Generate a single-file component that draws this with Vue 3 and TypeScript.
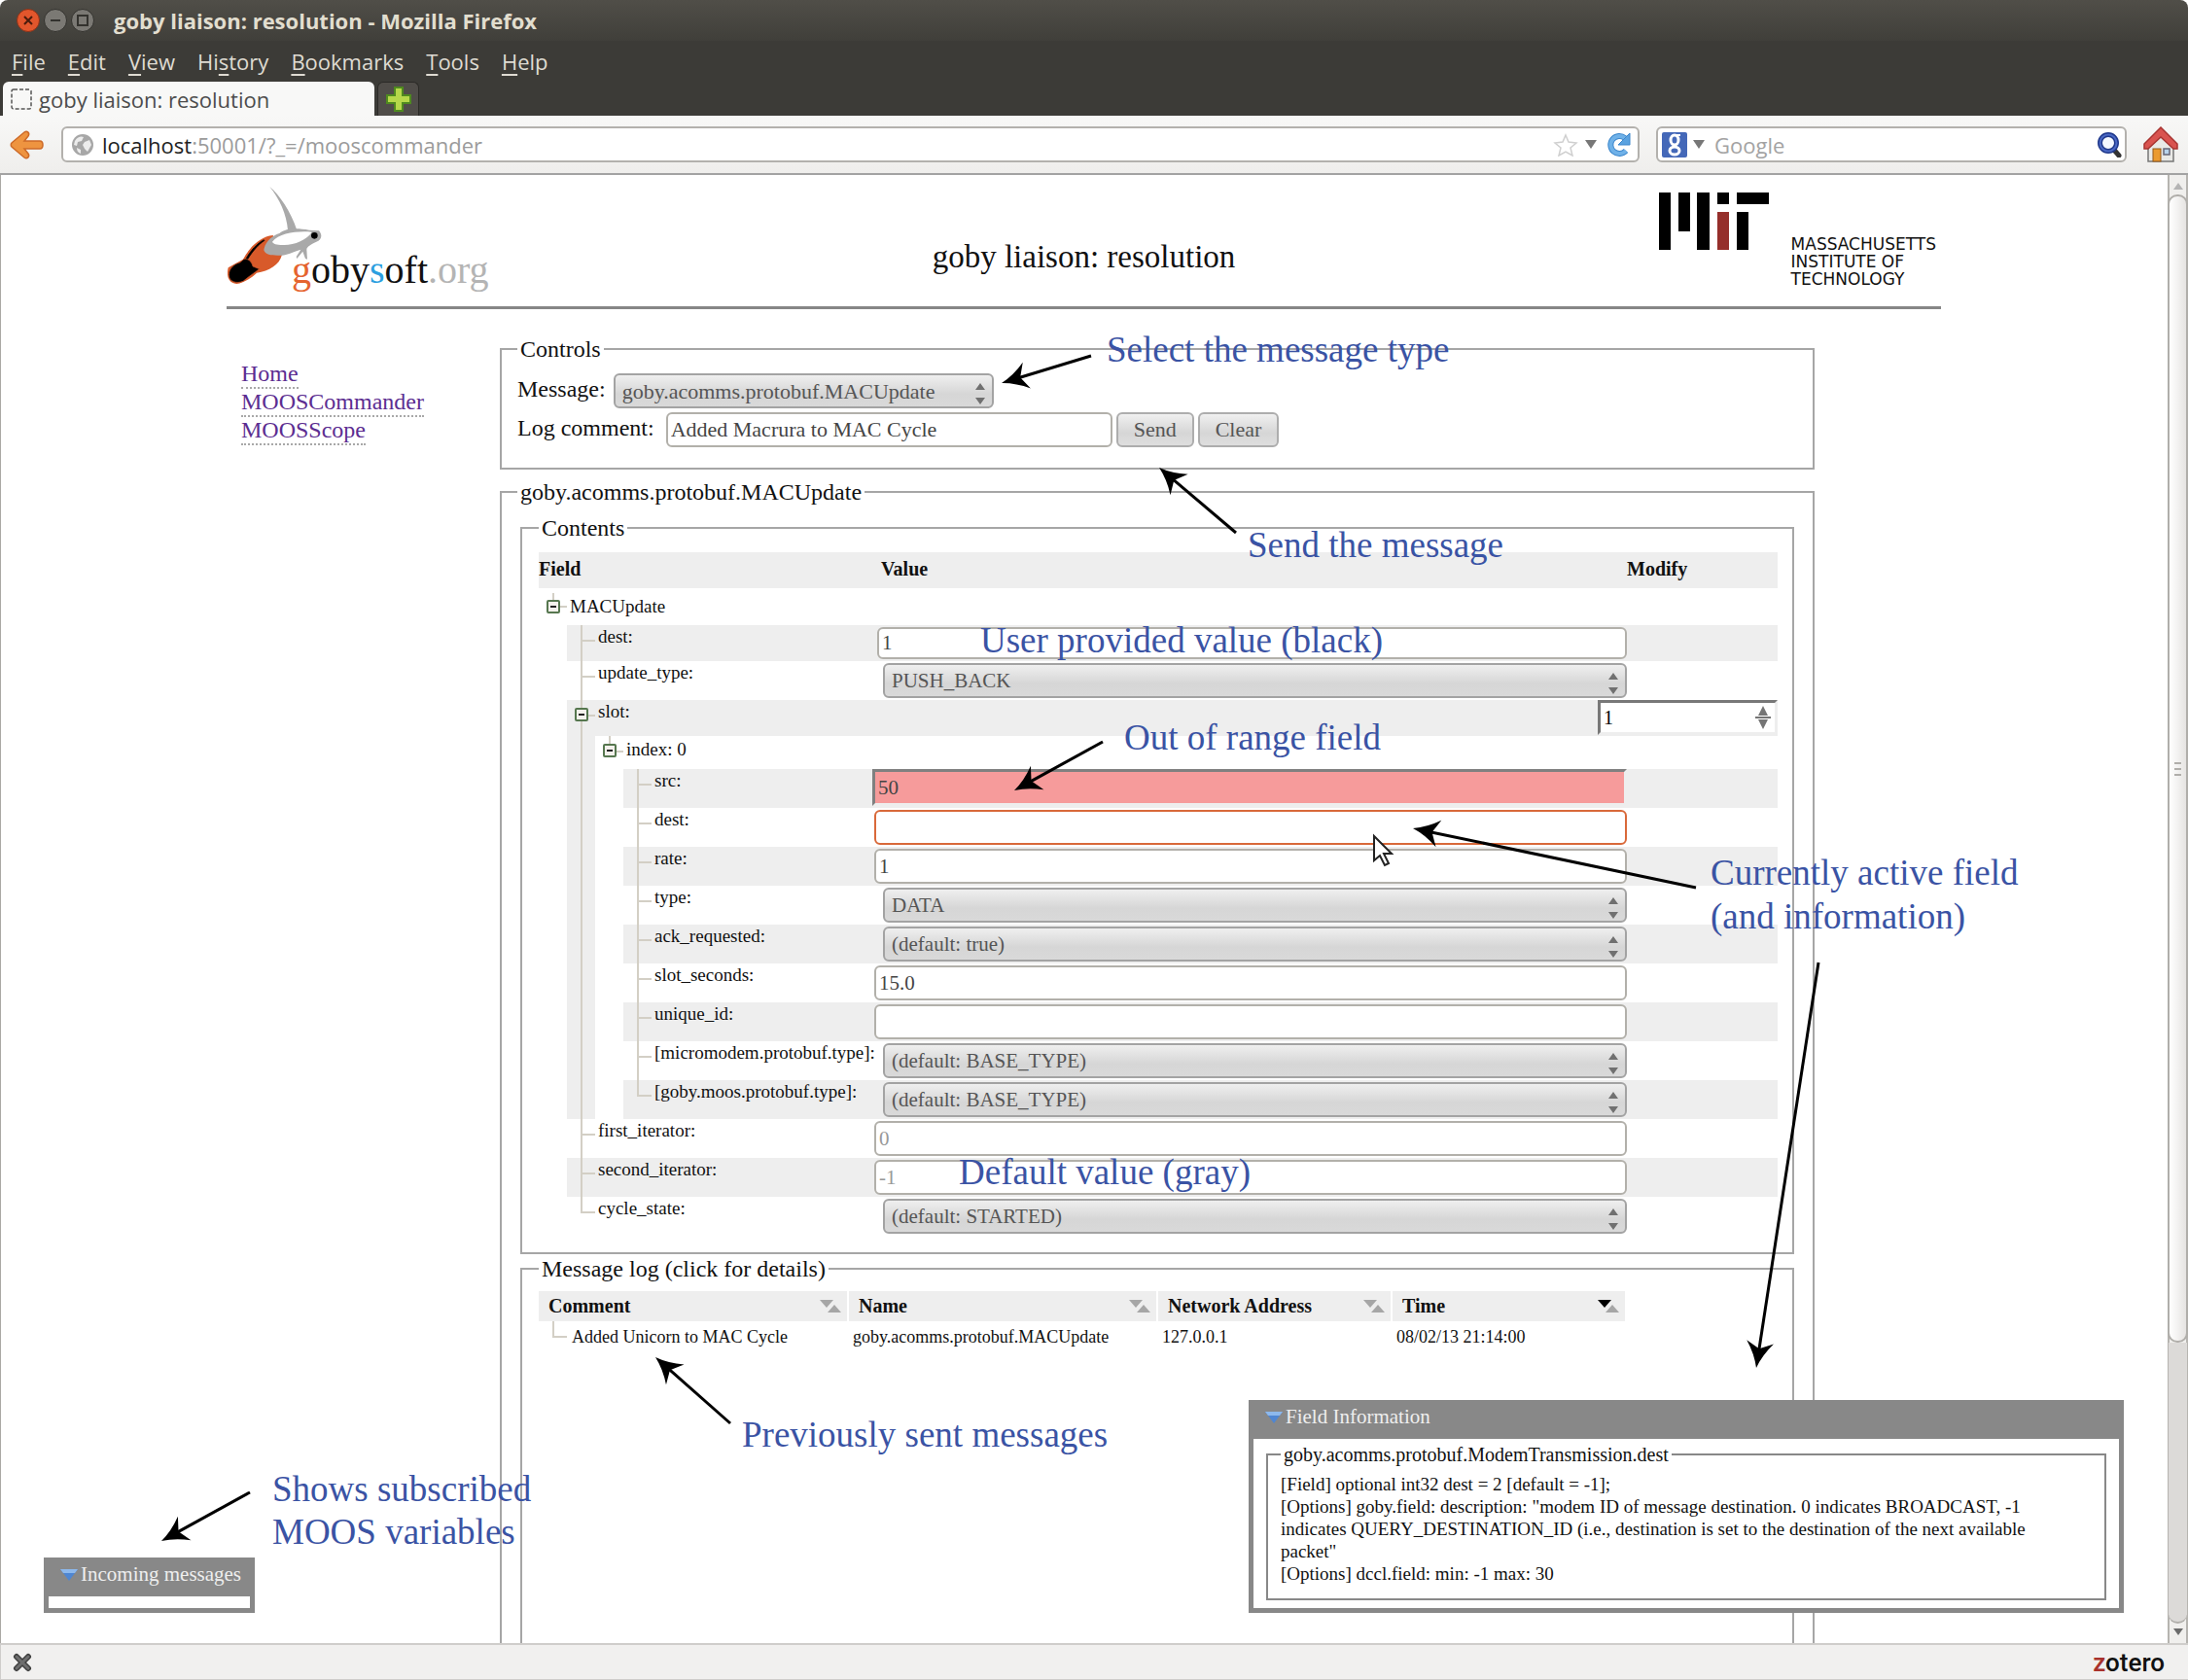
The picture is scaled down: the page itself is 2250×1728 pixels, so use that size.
<script setup lang="ts">
import { ref } from 'vue'

type Kind = 'text' | 'select' | 'spin' | 'none'

interface Field {
  id: string
  label: string
  depth: number
  kind: Kind
  value?: string
  shaded?: boolean
  node?: boolean
  last?: boolean
  size?: 'root' | 'compact' | 'index'
  state?: 'invalid' | 'active' | 'fallback'
}

interface Arrow {
  tail: [number, number]
  tip: [number, number]
}

const menus = [
  ['', 'F', 'ile'],
  ['', 'E', 'dit'],
  ['', 'V', 'iew'],
  ['Hi', 's', 'tory'],
  ['', 'B', 'ookmarks'],
  ['', 'T', 'ools'],
  ['', 'H', 'elp'],
]

const links = ['Home', 'MOOSCommander', 'MOOSScope']
const messageType = ref('goby.acomms.protobuf.MACUpdate')
const comment = ref('Added Macrura to MAC Cycle')

const fields = ref<Field[]>([
  { id: 'root', label: 'MACUpdate', depth: 0, kind: 'none', node: true, size: 'root' },
  { id: 'dest', label: 'dest:', depth: 1, kind: 'text', value: '1', shaded: true, size: 'compact' },
  { id: 'update', label: 'update_type:', depth: 1, kind: 'select', value: 'PUSH_BACK' },
  { id: 'slot', label: 'slot:', depth: 1, kind: 'spin', value: '1', shaded: true, node: true, size: 'compact' },
  { id: 'index', label: 'index: 0', depth: 2, kind: 'none', node: true, size: 'index' },
  { id: 'src', label: 'src:', depth: 3, kind: 'text', value: '50', shaded: true, state: 'invalid' },
  { id: 'slot-dest', label: 'dest:', depth: 3, kind: 'text', value: '', state: 'active' },
  { id: 'rate', label: 'rate:', depth: 3, kind: 'text', value: '1', shaded: true },
  { id: 'type', label: 'type:', depth: 3, kind: 'select', value: 'DATA' },
  { id: 'ack', label: 'ack_requested:', depth: 3, kind: 'select', value: '(default: true)', shaded: true },
  { id: 'seconds', label: 'slot_seconds:', depth: 3, kind: 'text', value: '15.0' },
  { id: 'unique', label: 'unique_id:', depth: 3, kind: 'text', value: '', shaded: true },
  { id: 'micromodem', label: '[micromodem.protobuf.type]:', depth: 3, kind: 'select', value: '(default: BASE_TYPE)' },
  { id: 'moos', label: '[goby.moos.protobuf.type]:', depth: 3, kind: 'select', value: '(default: BASE_TYPE)', shaded: true, last: true },
  { id: 'first', label: 'first_iterator:', depth: 1, kind: 'text', value: '0', state: 'fallback' },
  { id: 'second', label: 'second_iterator:', depth: 1, kind: 'text', value: '-1', shaded: true, state: 'fallback' },
  { id: 'cycle', label: 'cycle_state:', depth: 1, kind: 'select', value: '(default: STARTED)', last: true },
])

const logColumns = [
  { name: 'Comment', sorted: false },
  { name: 'Name', sorted: false },
  { name: 'Network Address', sorted: false },
  { name: 'Time', sorted: true },
]

const notes = [
  { x: 1138, y: 372, text: 'Select the message type' },
  { x: 1283, y: 573, text: 'Send the message' },
  { x: 1008, y: 671, text: 'User provided value (black)' },
  { x: 1156, y: 771, text: 'Out of range field' },
  { x: 1759, y: 910, text: 'Currently active field' },
  { x: 1759, y: 955, text: '(and information)' },
  { x: 986, y: 1218, text: 'Default value (gray)' },
  { x: 763, y: 1488, text: 'Previously sent messages' },
  { x: 280, y: 1544, text: 'Shows subscribed' },
  { x: 280, y: 1588, text: 'MOOS variables' },
]

const arrows: Arrow[] = [
  { tail: [1122, 366], tip: [1030, 394] },
  { tail: [1271, 548], tip: [1192, 481] },
  { tail: [1134, 763], tip: [1043, 813] },
  { tail: [1744, 913], tip: [1453, 852] },
  { tail: [1870, 990], tip: [1806, 1407] },
  { tail: [751, 1464], tip: [674, 1396] },
  { tail: [257, 1535], tip: [166, 1585] },
]

function headTransform(a: Arrow): string {
  const angle = (Math.atan2(a.tip[1] - a.tail[1], a.tip[0] - a.tail[0]) * 180) / Math.PI
  return `translate(${a.tip[0]} ${a.tip[1]}) rotate(${angle})`
}

function shaftEnd(a: Arrow): [number, number] {
  const dx = a.tail[0] - a.tip[0]
  const dy = a.tail[1] - a.tip[1]
  const len = Math.hypot(dx, dy)
  return [a.tip[0] + (dx / len) * 18, a.tip[1] + (dy / len) * 18]
}
</script>

<template>
  <div class="window">
    <header class="titlebar">
      <button class="wm close" aria-label="Close window">
        <svg viewBox="0 0 24 24"><circle cx="12" cy="12" r="11.500" fill="#e2562c" stroke="#8a3218" /><path d="M8 8l8 8M16 8l-8 8" stroke="#4a1b0c" stroke-width="2" /></svg>
      </button>
      <button class="wm" aria-label="Minimise window">
        <svg viewBox="0 0 24 24"><circle cx="12" cy="12" r="11.500" fill="#7b7974" stroke="#33322e" /><path d="M7 12h10" stroke="#33322e" stroke-width="2" /></svg>
      </button>
      <button class="wm" aria-label="Maximise window">
        <svg viewBox="0 0 24 24"><circle cx="12" cy="12" r="11.500" fill="#7b7974" stroke="#33322e" /><rect x="7" y="7" width="10" height="10" fill="none" stroke="#33322e" stroke-width="2" /></svg>
      </button>
      <h1>goby liaison: resolution - Mozilla Firefox</h1>
    </header>

    <nav class="menubar" aria-label="Application menu">
      <button v-for="m in menus" :key="m.join('')">{{ m[0] }}<u>{{ m[1] }}</u>{{ m[2] }}</button>
    </nav>

    <div class="tabs">
      <button class="tab">
        <svg width="22" height="22" viewBox="0 0 22 22"><rect x="1" y="1" width="20" height="20" rx="2" fill="none" stroke="#555" stroke-width="1.500" stroke-dasharray="4 2" /></svg>
        goby liaison: resolution
      </button>
      <button class="new-tab" aria-label="New tab">
        <svg width="26" height="26" viewBox="0 0 26 26"><path d="M9 1h8v8h8v8h-8v8H9v-8H1V9h8z" fill="#b5d84a" stroke="#4f8a1f" stroke-width="2" /></svg>
      </button>
    </div>

    <div class="toolbar">
      <button class="icon-button" aria-label="Back">
        <svg width="36" height="32" viewBox="0 0 36 32"><path d="M15 3c3-2 6 1 4 4l-4 5h16c4 0 4 8 0 8H15l4 5c2 3-1 6-4 4L2 18c-1-1-1-3 0-4z" fill="#ee9440" stroke="#cd6a28" stroke-width="1.500" /></svg>
      </button>
      <div class="location">
        <svg width="24" height="24" viewBox="0 0 24 24"><circle cx="12" cy="12" r="11" fill="#a7a7a7" /><path d="M4 8c3-5 7-5 9-4l-2 4-4 1-1 4-3-1zM14 9l5-2 2 5-4 7-3-3-2-4zM6 15l4 2v4c-3-1-4-3-4-6z" fill="#ececec" /></svg>
        <label class="host" for="url">localhost</label><input id="url" type="text" value=":50001/?_=/mooscommander" />
        <button class="icon-button" aria-label="Bookmark this page">
          <svg width="26" height="24" viewBox="0 0 26 24"><path d="M13 2l3 7 8 1-6 5 2 8-7-4-7 4 2-8-6-5 8-1z" fill="#fff" stroke="#cfcfcf" stroke-width="1.500" /></svg>
        </button>
        <button class="icon-button drop" aria-label="Show history"><svg width="12" height="9" viewBox="0 0 12 9"><path d="M0 0h12L6 9z" fill="#777" /></svg></button>
        <button class="icon-button" aria-label="Reload">
          <svg width="26" height="26" viewBox="0 0 26 26"><path d="M20 19a9 9 0 1 1-1-13" fill="none" stroke="#3c87cc" stroke-width="6" /><path d="M20 19a9 9 0 1 1-1-13" fill="none" stroke="#6fb1e8" stroke-width="4" /><path d="M24 1v12H12z" fill="#5aa2e0" stroke="#3c87cc" /></svg>
        </button>
      </div>
      <div class="search">
        <svg width="26" height="26" viewBox="0 0 26 26"><rect width="26" height="26" rx="2" fill="#4468b8" /><ellipse cx="13" cy="8" rx="4" ry="5" fill="none" stroke="#fff" stroke-width="3" /><ellipse cx="13" cy="19" rx="5" ry="4" fill="none" stroke="#fff" stroke-width="3" /><path d="M15 3h4" stroke="#fff" stroke-width="2" /></svg>
        <svg class="caret" width="12" height="9" viewBox="0 0 12 9"><path d="M0 0h12L6 9z" fill="#777" /></svg>
        <input type="text" placeholder="Google" aria-label="Search with Google" />
        <button class="icon-button" aria-label="Search">
          <svg width="26" height="26" viewBox="0 0 26 26"><path d="M17 17l6 7" stroke="#333" stroke-width="5" stroke-linecap="round" /><circle cx="12" cy="11" r="8.500" fill="#f4f8ff" stroke="#20398c" stroke-width="5" /><circle cx="12" cy="11" r="8.500" fill="none" stroke="#4a68c4" stroke-width="2" /></svg>
        </button>
      </div>
      <button class="icon-button" aria-label="Home page">
        <svg width="36" height="38" viewBox="0 0 36 38"><path d="M5 18v18h26V18L18 6z" fill="#e9e9e6" stroke="#777" stroke-width="1.500" /><path d="M18 1L1 18v5h4l13-12 13 12h4v-5z" fill="#d9534f" stroke="#a83431" stroke-width="1.500" /><rect x="10" y="23" width="8" height="13" fill="#eb9a2f" stroke="#94591a" /><rect x="21" y="23" width="6" height="6" fill="#b8d4ec" stroke="#667" stroke-width="1.500" /></svg>
      </button>
    </div>

    <div class="viewport">
      <div class="page">
        <header class="masthead">
          <div class="logo">
            <svg class="fish" width="103" height="103" viewBox="99 60 309 309">
              <path d="M232 66C262 92 296 140 316 200L288 200C284 150 262 104 232 66z" fill="#a9a9a9" />
              <path d="M242 216C200 220 168 256 150 290L104 316C98 340 104 364 130 366C150 364 176 348 192 332C230 326 262 308 270 276z" fill="#d85a2a" />
              <path d="M214 230C194 240 172 264 158 290L164 290C180 264 196 246 216 232z" fill="#000" stroke="#000" stroke-width="2" />
              <path d="M152 290C164 286 176 296 180 312L200 320C184 332 164 346 150 358C130 366 106 360 106 338C106 318 124 304 140 300z" fill="#000" stroke="#c9552a" stroke-width="2" />
              <path d="M214 262C218 232 244 216 262 210C284 192 320 194 354 200L384 202C396 216 392 230 376 236C356 246 346 252 346 260L348 290L342 288L334 266L316 288L314 282L328 260C300 268 284 280 256 278C236 278 218 276 214 262z" fill="#a9a9a9" />
              <path d="M240 236C262 208 320 202 362 206C348 230 304 248 272 246C254 246 242 242 240 236z" fill="#fff" />
              <circle cx="370" cy="217" r="10" fill="#000" />
            </svg>
            <span class="wordmark"><b class="g">g</b>oby<b class="s">s</b>oft<b class="org">.org</b></span>
          </div>
          <h2>goby liaison: resolution</h2>
          <div class="mit">
            <svg width="113" height="59" viewBox="0 0 113 59"><path d="M0 0h12v59H0zM20 0h12v40H20zM39 0h13v59H39zM60 0h12v12H60zM80 0h33v12H80zM80 20h12v39H80z" fill="#000" /><path d="M60 20h12v39H60z" fill="#952f2b" /></svg>
            <p>MASSACHUSETTS<br />INSTITUTE OF<br />TECHNOLOGY</p>
          </div>
        </header>

        <div class="columns">
          <nav class="side" aria-label="Site">
            <ul>
              <li v-for="l in links" :key="l"><a href="#">{{ l }}</a></li>
            </ul>
          </nav>

          <main>
            <fieldset class="controls">
              <legend>Controls</legend>
              <div class="control-row">
                <label for="message">Message:</label>
                <span class="combo message">
                  <select id="message" v-model="messageType"><option>goby.acomms.protobuf.MACUpdate</option></select>
                  <svg width="10" height="22" viewBox="0 0 10 22"><path d="M0 7l5-7 5 7zM0 15h10l-5 7z" fill="#707070" /></svg>
                </span>
              </div>
              <div class="control-row">
                <label for="comment">Log comment:</label>
                <input id="comment" v-model="comment" class="box comment" type="text" />
                <button class="push">Send</button>
                <button class="push">Clear</button>
              </div>
            </fieldset>

            <fieldset class="message-box">
              <legend>goby.acomms.protobuf.MACUpdate</legend>

              <fieldset class="inner">
                <legend>Contents</legend>
                <table class="tree">
                  <colgroup><col class="c-field" /><col /><col class="c-modify" /></colgroup>
                  <thead>
                    <tr><th scope="col">Field</th><th scope="col" class="value-head">Value</th><th scope="col">Modify</th></tr>
                  </thead>
                  <tbody>
                    <tr v-for="f in fields" :key="f.id" :class="[f.size, { shaded: f.shaded }]">
                      <td class="name">
                        <div class="branch">
                          <span v-if="f.depth > 0" class="gap"></span>
                          <span v-if="f.depth > 1" class="gap strip"></span>
                          <span v-if="f.depth > 2" class="gap"></span>
                          <span class="joint" :class="{ top: f.depth % 2 === 0, last: f.last }">
                            <button v-if="f.node" class="toggle" :aria-label="'Collapse ' + f.label"></button>
                          </span>
                          <label :for="f.id">{{ f.label }}</label>
                        </div>
                      </td>
                      <template v-if="f.kind === 'spin'">
                        <td colspan="2" class="fill spin-cell">
                          <span class="spin">
                            <input :id="f.id" v-model="f.value" type="text" />
                            <svg width="16" height="24" viewBox="0 0 16 24"><path d="M3 10l5-10 5 10zM3 14h10l-5 10zM0 11h16v2H0z" fill="#757575" /></svg>
                          </span>
                        </td>
                      </template>
                      <template v-else>
                        <td class="fill">
                          <input v-if="f.kind === 'text'" :id="f.id" v-model="f.value" type="text" class="box" :class="f.state" />
                          <span v-else-if="f.kind === 'select'" class="combo">
                            <select :id="f.id" v-model="f.value"><option>{{ f.value }}</option></select>
                            <svg width="10" height="22" viewBox="0 0 10 22"><path d="M0 7l5-7 5 7zM0 15h10l-5 7z" fill="#707070" /></svg>
                          </span>
                        </td>
                        <td class="fill"></td>
                      </template>
                    </tr>
                  </tbody>
                </table>
              </fieldset>

              <fieldset class="inner log">
                <legend>Message log (click for details)</legend>
                <table class="log-table">
                  <colgroup><col class="wide" /><col class="wide" /><col class="thin" /><col class="thin" /></colgroup>
                  <thead>
                    <tr>
                      <th v-for="c in logColumns" :key="c.name" scope="col">
                        <div>
                          {{ c.name }}
                          <svg width="22" height="13" viewBox="0 0 22 13"><path d="M8 13l7-8 7 8z" fill="#a6a6a6" /><path d="M0 0h14L7 8z" :fill="c.sorted ? '#000' : '#a6a6a6'" /></svg>
                        </div>
                      </th>
                    </tr>
                  </thead>
                  <tbody>
                    <tr>
                      <td class="first"><span class="joint last"></span>Added Unicorn to MAC Cycle</td>
                      <td>goby.acomms.protobuf.MACUpdate</td>
                      <td>127.0.0.1</td>
                      <td>08/02/13 21:14:00</td>
                    </tr>
                  </tbody>
                </table>
              </fieldset>
            </fieldset>
          </main>
        </div>

        <section class="panel incoming">
          <h3><svg width="18" height="12" viewBox="0 0 18 12"><path d="M0 0h18L9 12z" fill="#4f86d2" /><path d="M0 0h18l-3 4H3z" fill="#8db8ec" /></svg>Incoming messages</h3>
          <div class="empty"></div>
        </section>

        <section class="panel info">
          <h3><svg width="18" height="12" viewBox="0 0 18 12"><path d="M0 0h18L9 12z" fill="#4f86d2" /><path d="M0 0h18l-3 4H3z" fill="#8db8ec" /></svg>Field Information</h3>
          <div class="panel-body">
            <fieldset>
              <legend>goby.acomms.protobuf.ModemTransmission.dest</legend>
              <p>[Field] optional int32 dest = 2 [default = -1];</p>
              <p>[Options] goby.field: description: "modem ID of message destination. 0 indicates BROADCAST, -1 indicates QUERY_DESTINATION_ID (i.e., destination is set to the destination of the next available packet"</p>
              <p>[Options] dccl.field: min: -1 max: 30</p>
            </fieldset>
          </div>
        </section>
      </div>

      <div class="scrollbar" aria-hidden="true">
        <svg width="10" height="7" viewBox="0 0 10 7"><path d="M0 7l5-7 5 7z" fill="#b4b4b4" /></svg>
        <div class="thumb"><i></i><i></i><i></i></div>
        <div class="trough"></div>
        <svg width="10" height="7" viewBox="0 0 10 7"><path d="M0 0h10L5 7z" fill="#6b6b6b" /></svg>
      </div>
    </div>

    <footer class="statusbar">
      <button class="icon-button" aria-label="Close add-on bar">
        <svg width="20" height="20" viewBox="0 0 20 20"><path d="M4 4l12 12M16 4L4 16" stroke="#3f3f3f" stroke-width="6" stroke-linecap="round" /><path d="M4 4l12 12M16 4L4 16" stroke="#6e6e6e" stroke-width="3" stroke-linecap="round" /></svg>
      </button>
      <span class="zotero"><b>z</b>otero</span>
    </footer>

    <svg class="notes">
      <text v-for="n in notes" :key="n.text" :x="n.x" :y="n.y">{{ n.text }}</text>
      <g v-for="(a, i) in arrows" :key="i">
        <line :x1="a.tail[0]" :y1="a.tail[1]" :x2="shaftEnd(a)[0]" :y2="shaftEnd(a)[1]" stroke="#000" stroke-width="3" />
        <path d="M0 0Q-14 -4 -27 -14L-20 0L-27 14Q-14 4 0 0z" :transform="headTransform(a)" />
      </g>
      <path d="M1413 860v25l6-5 5 10 4-2-5-10h8z" fill="#fff" stroke="#222" stroke-width="2" />
    </svg>
  </div>
</template>

<style>
body {
  margin: 0;
  overflow: hidden;
}
</style>

<style scoped>
* {
  box-sizing: border-box;
}
.window {
  position: relative;
  display: flex;
  flex-direction: column;
  height: 100vh;
  font-family: "Liberation Serif", serif;
  color: #111;
  background: #fff;
}
button {
  font: inherit;
  color: inherit;
  padding: 0;
  border: 0;
  background: none;
}
svg {
  display: block;
  flex: none;
}
h1, h2, h3, p, ul {
  margin: 0;
  padding: 0;
  font-weight: normal;
}
.titlebar, .menubar, .tabs, .toolbar, .statusbar {
  flex: none;
  display: flex;
  align-items: center;
  font-family: "Open Sans", "Noto Sans", sans-serif;
}
.titlebar {
  height: 42px;
  padding-left: 17px;
  gap: 4px;
  background: linear-gradient(#504e48, #403f3a);
  border-radius: 8px 8px 0 0;
}
.wm {
  width: 24px;
  height: 24px;
}
.titlebar h1 {
  margin-left: 16px;
  font-size: 22px;
  line-height: 28px;
  font-weight: 700;
  color: #e2decf;
}
.menubar {
  height: 41px;
  padding-left: 12px;
  gap: 23px;
  font-size: 22px;
  line-height: 28px;
  color: #dfdbd2;
  background: #3c3b37;
}
.menubar u {
  text-underline-offset: 4px;
  text-decoration-thickness: 2px;
}
.tabs {
  height: 36px;
  align-items: flex-end;
  gap: 3px;
  padding-left: 3px;
  background: #3c3b37;
}
.tab {
  display: flex;
  align-items: center;
  gap: 7px;
  width: 382px;
  height: 35px;
  padding-left: 8px;
  font-size: 22px;
  color: #4c4c4c;
  background: #f8f8f7;
  border-radius: 6px 6px 0 0;
}
.new-tab {
  display: grid;
  place-items: center;
  width: 43px;
  height: 35px;
  background: #504d49;
  border: 1px solid #2b2a27;
  border-bottom: 0;
  border-radius: 6px 6px 0 0;
}
.toolbar {
  height: 61px;
  padding: 0 10px;
  gap: 17px;
  background: linear-gradient(#f8f8f7, #efeeec);
  border-bottom: 2px solid #a3a3a3;
}
.location, .search {
  display: flex;
  align-items: center;
  height: 37px;
  background: #fff;
  border: 2px solid #b3b1ad;
  border-radius: 6px;
  font-size: 22px;
}
.location {
  flex: 1;
  padding: 0 6px 0 8px;
}
.location .drop {
  margin: 0 10px 0 7px;
}
.host {
  margin-left: 8px;
  color: #222;
}
.location input, .search input {
  flex: 1;
  min-width: 0;
  padding: 0;
  border: 0;
  outline: 0;
  background: none;
  font: inherit;
  color: #9b9b9b;
}
.search {
  width: 484px;
  padding: 0 3px 0 4px;
}
.search .caret {
  margin: 0 10px 0 6px;
}
.search input::placeholder {
  color: #a3a3a3;
  opacity: 1;
}
.viewport {
  flex: 1;
  min-height: 0;
  display: flex;
  border-left: 1px solid #aaa8a4;
}
.page {
  position: relative;
  flex: 1;
  overflow: hidden;
  padding: 0 233px 0 232px;
}
.masthead {
  display: grid;
  grid-template-columns: 1fr auto 1fr;
  padding: 10px 0 17px;
  border-bottom: 3px solid #868686;
}
.logo {
  display: flex;
  align-items: flex-end;
}
.fish {
  margin: 0 -36px 5px 0;
}
.wordmark {
  font-size: 40px;
  line-height: 40px;
}
.wordmark b {
  font-weight: normal;
}
.wordmark .g {
  color: #e5642f;
}
.wordmark .s {
  color: #2c9fe0;
}
.wordmark .org {
  color: #b4b4b4;
}
h2 {
  padding-top: 56px;
  font-size: 33px;
  line-height: 36px;
}
.mit {
  justify-self: end;
  display: flex;
  gap: 23px;
  padding: 8px 5px 0 0;
}
.mit p {
  padding-top: 44px;
  font-family: "DejaVu Sans", sans-serif;
  font-size: 17px;
  line-height: 18px;
}
.columns {
  display: flex;
  padding-top: 26px;
}
.side {
  flex: none;
  width: 281px;
  padding: 26px 0 0 15px;
}
.side ul {
  list-style: none;
  font-size: 24px;
  line-height: 29px;
}
.side a {
  padding-bottom: 1px;
  color: #5c2d91;
  text-decoration: none;
  border-bottom: 2px dotted #a8a8a8;
}
main {
  flex: 1;
  min-width: 0;
  margin-right: 130px;
}
fieldset {
  min-width: 0;
  margin: 0;
  padding: 0;
  border: 2px solid #a6a6a6;
}
legend {
  padding: 0 3px;
  font-size: 24px;
  line-height: 30px;
}
.controls {
  padding: 10px 16px 21px;
  margin-bottom: 8px;
}
.control-row {
  display: flex;
  gap: 4px;
  font-size: 24px;
  line-height: 32px;
}
.control-row + .control-row {
  margin-top: 4px;
}
.control-row label {
  margin-right: 4px;
}
.box, .combo select {
  display: block;
  width: 100%;
  height: 36px;
  padding: 0 3px;
  border: 2px solid #b2b0aa;
  border-radius: 6px;
  outline: 0;
  background: #fff;
  font: 21px "Liberation Serif", serif;
  color: #444;
}
.combo {
  position: relative;
  display: block;
}
.combo select {
  appearance: none;
  padding-left: 7px;
  border-color: #a3a3a3;
  background: linear-gradient(#efefef, #d6d6d6 60%, #d9d9d9);
  color: #555;
}
.combo svg {
  position: absolute;
  right: 9px;
  top: 10px;
  pointer-events: none;
}
.message {
  width: 391px;
}
.message select, .box.comment {
  font-size: 22px;
}
.box.comment {
  width: 459px;
  margin-left: 4px;
}
.push {
  height: 36px;
  padding: 0 16px;
  border: 2px solid #adadad;
  border-radius: 6px;
  background: linear-gradient(#f0f0f0, #d6d6d6 60%, #dedede);
  font-size: 22px;
  color: #555;
}
.message-box {
  padding: 7px 16px 0;
}
.inner {
  margin: 0 3px;
  padding: 10px 15px 17px 17px;
}
table {
  border-collapse: collapse;
  table-layout: fixed;
}
th, td {
  padding: 0;
  text-align: left;
  vertical-align: top;
}
.tree {
  width: 100%;
  font-size: 19px;
}
.c-field {
  width: 343px;
}
.c-modify {
  width: 155px;
}
.tree th {
  height: 37px;
  font-size: 20px;
  line-height: 34px;
  background: #eee;
}
.tree .value-head {
  padding-left: 9px;
}
.tree tbody tr {
  --row: 40px;
  --text: 24px;
  height: var(--row);
}
.tree tbody .root {
  --row: 38px;
  --text: 37px;
}
.tree tbody .compact {
  --row: 37px;
}
.tree tbody .index {
  --row: 34px;
  --text: 28px;
}
.branch {
  display: flex;
  height: var(--row);
  line-height: var(--text);
  white-space: nowrap;
}
.gap {
  flex: none;
  width: 29px;
}
.strip {
  background: linear-gradient(90deg, #eee 14px, #d3cfc5 14px, #d3cfc5 16px, #eee 16px);
}
.shaded .branch label, .shaded .joint, .shaded .fill {
  background-color: #eee;
}
.branch label {
  flex: 1;
  padding-left: 3px;
}
/* A joint is the vertical guide plus the short stub that leads to the label. */
.joint {
  position: relative;
  flex: none;
  width: 29px;
}
.joint::before {
  content: "";
  position: absolute;
  left: 14px;
  top: 0;
  bottom: 0;
  width: 2px;
  background: #d3cfc5;
}
.joint::after {
  content: "";
  position: absolute;
  left: 14px;
  right: 0;
  top: 15px;
  height: 2px;
  background: #d3cfc5;
}
.joint.top::before {
  bottom: auto;
  height: 15px;
}
.joint.last::before {
  bottom: auto;
  height: 17px;
}
.root .joint::after {
  top: 18px;
}
.root .joint::before {
  top: 5px;
}
.toggle {
  position: absolute;
  z-index: 1;
  left: 8px;
  top: 8px;
  width: 14px;
  height: 14px;
  border: 2px solid #56774f;
  border-radius: 2px;
  background: linear-gradient(#222, #222) center / 6px 2px no-repeat #f3f1ec;
}
.root .toggle {
  top: 12px;
}
.tree .fill .box {
  width: auto;
  min-width: calc(100% - 2px);
  margin: 2px 0 0 2px;
}
.tree .compact .box {
  height: 33px;
  min-width: calc(100% - 5px);
  margin-left: 5px;
}
.tree .fill .combo {
  margin: 2px 0 0 11px;
}
.tree .fill .invalid {
  min-width: 100%;
  height: 38px;
  margin: 0;
  border: 3px solid #808080;
  border-right-color: #eee;
  border-bottom-color: #eee;
  border-radius: 0;
  background: #f69b9b;
}
.box.active {
  border-color: #d9693a;
}
.box.fallback {
  color: #999;
}
.spin {
  display: flex;
  align-items: center;
  width: 185px;
  height: 36px;
  margin-left: auto;
  padding-right: 4px;
  border: 3px solid #787878;
  border-right-color: #eee;
  border-bottom-color: #eee;
  background: #fff;
}
.spin input {
  flex: 1;
  min-width: 0;
  padding: 0 3px;
  border: 0;
  outline: 0;
  background: none;
  font: 20px "Liberation Serif", serif;
}
.log {
  min-height: 560px;
  padding-top: 8px;
}
.log-table {
  width: 1118px;
  font-size: 18px;
  line-height: 32px;
}
.wide {
  width: 318px;
}
.thin {
  width: 241px;
}
.log-table th {
  height: 31px;
  font-size: 20px;
  line-height: 31px;
  background: #eee;
  border-right: 2px solid #fff;
}
.log-table th div {
  display: flex;
  align-items: center;
  justify-content: space-between;
  padding: 0 6px 0 10px;
}
.log-table td {
  padding-left: 5px;
}
.log-table .first {
  display: flex;
  gap: 5px;
  padding-left: 0;
}
.panel {
  position: absolute;
  bottom: 31px;
  background: #888;
  border: 5px solid #888;
  border-top: 0;
}
.panel h3 {
  display: flex;
  align-items: center;
  gap: 3px;
  height: 40px;
  padding: 0 9px 5px 12px;
  font-size: 21px;
  color: #eee;
}
.incoming {
  left: 44px;
}
.empty {
  height: 12px;
  background: #fff;
}
.info {
  right: 45px;
  width: 900px;
}
.panel-body {
  padding: 4px 13px 8px;
  background: #fff;
}
.info fieldset {
  padding: 7px 60px 14px 13px;
  border-color: #888;
  font-size: 19px;
  line-height: 23px;
}
.info legend {
  font-size: 20px;
  line-height: 24px;
}
.scrollbar {
  flex: none;
  display: flex;
  flex-direction: column;
  align-items: center;
  justify-content: space-between;
  width: 21px;
  padding: 8px 0;
  background: #f0efed;
  border: 2px solid #b6b4b0;
  border-width: 0 2px;
}
.thumb {
  flex: 1182;
  display: flex;
  flex-direction: column;
  align-items: center;
  justify-content: center;
  gap: 4px;
  width: 21px;
  margin-top: 5px;
  border: 2px solid #b0aeaa;
  border-radius: 10px;
  background: linear-gradient(90deg, #fff, #e6e4e2);
}
.thumb i {
  width: 7px;
  height: 2px;
  background: #b0aeaa;
}
.trough {
  flex: 288;
  width: 19px;
  margin-bottom: 5px;
  border-bottom: 2px solid #b0aeaa;
  border-radius: 0 0 10px 10px;
  background: #dcdad8;
}
.statusbar {
  justify-content: space-between;
  height: 38px;
  padding: 0 24px 0 12px;
  background: #f1f0ef;
  border: 2px solid #cfcdcb;
  border-width: 2px 0 1px 1px;
}
.zotero {
  font-family: Roboto, sans-serif;
  font-size: 26px;
  font-weight: 500;
  line-height: 30px;
}
.zotero b {
  font-weight: 500;
  color: #a8322c;
}
.notes {
  position: absolute;
  inset: 0;
  width: 100%;
  height: 100%;
  pointer-events: none;
}
.notes text {
  font-size: 37px;
  fill: #3a53a4;
}
</style>
